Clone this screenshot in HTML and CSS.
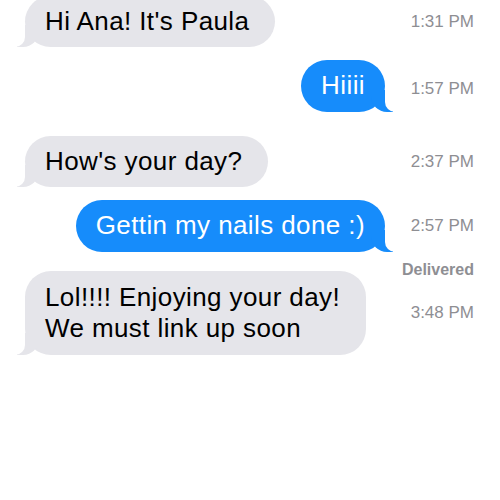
FILE: index.html
```html
<html>
    <head>
        <title>Messages</title>
        <link rel="stylesheet" href="styles.css">
    </head>
    <body>
        <div class="thread">

            <div class="row row-first">
                <div class="msg"><div class="bubble them">Hi Ana! It's Paula</div></div>
                <div class="time">1:31 PM</div>
            </div>

            <div class="row row-same">
                <div class="msg msg-me"><div class="bubble me">Hiiii</div></div>
                <div class="time time-low">1:57 PM</div>
            </div>

            <div class="row row-switch">
                <div class="msg"><div class="bubble them">How's your day?</div></div>
                <div class="time">2:37 PM</div>
            </div>

            <div class="row row-same">
                <div class="msg msg-me"><div class="bubble me">Gettin my nails done :)</div></div>
                <div class="time">2:57 PM</div>
            </div>

            <div class="delivered">Delivered</div>

            <div class="row row-after-status">
                <div class="msg"><div class="bubble them tall">Lol!!!! Enjoying your day!<br>We must link up soon</div></div>
                <div class="time">3:48 PM</div>
            </div>

        </div>
    </body>
</html>
```

FILE: styles.css
```css
* {
    font-family: 'Liberation Sans', Arial, sans-serif;
}

body {
    margin: 0;
    padding: 0;
    background: #ffffff;
}

.thread {
    display: flex;
    flex-direction: column;
    padding: 0 26px 0 25px;
    margin-top: -4px;
}

.row {
    display: grid;
    grid-template-columns: 1fr 89px;
    align-items: center;
}

.row-same {
    margin-top: 13px;
}

.row-switch {
    margin-top: 24px;
}

.row-after-status {
    margin-top: -8px;
}

.msg {
    display: flex;
}

.msg-me {
    justify-content: flex-end;
}

.bubble {
    position: relative;
    font-size: 26px;
    letter-spacing: 0.4px;
    line-height: 31px;
    padding: 10px 26px 10px 20px;
    border-radius: 26px;
}

.tall {
    padding-top: 11px;
    padding-bottom: 11px;
}

.them {
    background: #e5e5ea;
    color: #000000;
}

.me {
    background: #168cfb;
    color: #ffffff;
    padding: 10px 20px 11px 20px;
}

/* tails */
.bubble::before,
.bubble::after {
    content: "";
    position: absolute;
    bottom: 0;
    height: 22px;
}

.them::before {
    left: -8px;
    width: 22px;
    background: #e5e5ea;
    border-bottom-right-radius: 16px;
}

.them::after {
    left: -10px;
    width: 10px;
    background: #ffffff;
    border-bottom-right-radius: 10px;
}

.me::before {
    right: -8px;
    width: 22px;
    background: #168cfb;
    border-bottom-left-radius: 16px;
}

.me::after {
    right: -10px;
    width: 10px;
    background: #ffffff;
    border-bottom-left-radius: 10px;
}

.time {
    text-align: right;
    font-size: 17px;
    color: #8e8e93;
}

.time-low {
    padding-top: 6px;
}

.delivered {
    text-align: right;
    font-size: 16px;
    font-weight: bold;
    line-height: 18px;
    color: #8e8e93;
    margin-top: 9px;
}
```
